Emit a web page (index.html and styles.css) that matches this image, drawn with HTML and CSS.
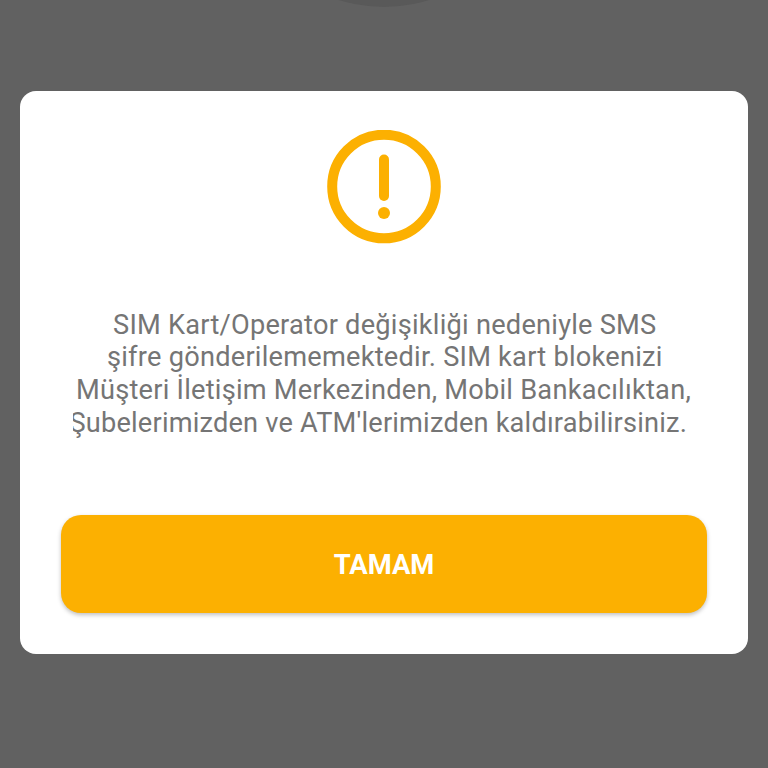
FILE: index.html
```html
<!DOCTYPE html>
<html lang="tr">
<head>
<meta charset="utf-8">
<title>SIM Kart</title>
<link rel="stylesheet" href="styles.css">
</head>
<body>
<div class="backdrop-circle"></div>
<main class="dialog">
<svg class="icon" viewBox="0 0 114 114" fill="none" stroke="#fcb001" stroke-linecap="round">
<circle cx="57" cy="56.5" r="51.8" stroke-width="10"/>
<path d="M57 29.500v36.500" stroke-width="10"/>
<circle cx="57" cy="83" r="6" fill="#fcb001" stroke="none"/>
</svg>
<p class="message">
<span class="line l1">SIM Kart/Operator değişikliği nedeniyle SMS</span>
<span class="line l2">şifre gönderilememektedir. SIM kart blokenizi</span>
<span class="line l3">Müşteri İletişim Merkezinden, Mobil Bankacılıktan,</span>
<span class="line l4">Şubelerimizden ve ATM'lerimizden kaldırabilirsiniz.</span>
</p>
<button class="confirm">TAMAM</button>
</main>
</body>
</html>
```

FILE: styles.css
```css
* { box-sizing: border-box; }
body {
  margin: 0;
  height: 768px;
  overflow: hidden;
  padding: 91px 20px 0;
  background: #616161;
  font-family: Roboto, "Liberation Sans", sans-serif;
}
.backdrop-circle {
  position: absolute;
  left: 234px;
  top: -293px;
  width: 300px;
  height: 300px;
  border-radius: 50%;
  background: #595959;
}
.dialog {
  position: relative;
  display: flex;
  flex-direction: column;
  align-items: center;
  height: 563px;
  padding: 39px 41px 41.5px;
  border-radius: 16px;
  background: #fff;
}
.icon { width: 114px; height: 114px; flex: none; }
.message {
  margin: 64.5px 0 0;
  width: 622px;
  overflow: hidden;
  color: #757575;
  font-size: 27.2px;
  letter-spacing: .24px;
  line-height: 32.8px;
}
.line { display: block; width: max-content; white-space: nowrap; }
.l1 { margin-left: 40px; }
.l2 { margin-left: 34px; }
.l3 { margin-left: 3px; }
.l4 { margin-left: -3.5px; letter-spacing: .19px; }
.confirm {
  width: 646px;
  height: 98px;
  margin-top: auto;
  padding: 2px 0 0;
  border: 0;
  border-radius: 20px;
  background: #fcb001;
  box-shadow: 0 2px 4px rgba(0, 0, 0, .25);
  color: #fff;
  font: 700 27.4px Roboto, sans-serif;
}
```
